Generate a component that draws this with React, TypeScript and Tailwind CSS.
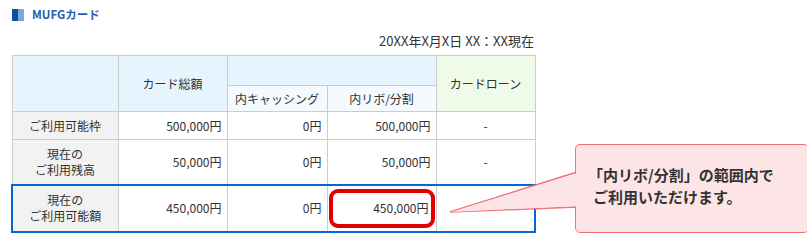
import React from "react";

const font = { fontFamily: '"Noto Sans CJK JP", "Noto Sans", sans-serif' };

export default function App() {
  const bd = "border border-[#cccccc]";
  return (
    <div className="relative w-[807px] h-[247px] bg-white text-[#333333]" style={font}>
      <div className="ml-[12px] pt-[9px] flex items-center gap-[8px] h-[21px]">
        <div className="flex h-[12px] w-[12px]">
          <div className="w-[6px] h-full bg-[#0e4f9e]" />
          <div className="w-[6px] h-full bg-[#7aa8dc]" />
        </div>
        <span className="text-[11.5px] font-bold text-[#2a5ea8] leading-none">MUFGカード</span>
      </div>
      <div className="ml-[11px] w-[523px]">
        <div className="text-right text-[13px] leading-none mt-[13px] pr-0">20XX年X月X日 XX：XX現在</div>
        <table className="mt-[8px] border-collapse table-fixed w-[523px] text-[12px] leading-[16px]">
          <colgroup>
            <col className="w-[106px]" />
            <col className="w-[109px]" />
            <col className="w-[100px]" />
            <col className="w-[109px]" />
            <col className="w-[99px]" />
          </colgroup>
          <tbody>
            <tr className="h-[30px]">
              <td rowSpan={2} className={`${bd} bg-[#e6f4fd]`} />
              <td rowSpan={2} className={`${bd} bg-[#e6f4fd] text-center`}>カード総額</td>
              <td colSpan={2} className={`${bd} bg-[#e6f4fd]`} />
              <td rowSpan={2} className={`${bd} bg-[#f0fae8] text-center`}>カードローン</td>
            </tr>
            <tr className="h-[26px]">
              <td className={`${bd} bg-[#f4fafe] text-center`}>内キャッシング</td>
              <td className={`${bd} bg-[#f4fafe] text-center`}>内リボ/分割</td>
            </tr>
            <tr className="h-[28px]">
              <td className={`${bd} bg-[#f2f2f2] text-center`}>ご利用可能枠</td>
              <td className={`${bd} text-right pr-[5px]`}>500,000円</td>
              <td className={`${bd} text-right pr-[5px]`}>0円</td>
              <td className={`${bd} text-right pr-[5px]`}>500,000円</td>
              <td className={`${bd} text-center`}>-</td>
            </tr>
            <tr className="h-[45px]">
              <td className={`${bd} bg-[#f2f2f2] text-center`}>現在の<br />ご利用残高</td>
              <td className={`${bd} text-right pr-[5px]`}>50,000円</td>
              <td className={`${bd} text-right pr-[5px]`}>0円</td>
              <td className={`${bd} text-right pr-[5px]`}>50,000円</td>
              <td className={`${bd} text-center`}>-</td>
            </tr>
            <tr className="h-[47px]">
              <td className="border-2 border-[#0a64d8] border-r border-r-[#cccccc] bg-[#f2f2f2] text-center">現在の<br />ご利用可能額</td>
              <td className="border-y-2 border-y-[#0a64d8] border-x border-x-[#cccccc] text-right pr-[5px]">450,000円</td>
              <td className="border-y-2 border-y-[#0a64d8] border-x border-x-[#cccccc] text-right pr-[5px]">0円</td>
              <td className="border-y-2 border-y-[#0a64d8] border-x border-x-[#cccccc] px-[1px] py-[2px]">
                <div className="h-[39px] border-[4px] border-[#e00000] rounded-[9px] flex items-center justify-end pr-[2px]">450,000円</div>
              </td>
              <td className="border-2 border-[#0a64d8] border-l border-l-[#cccccc]" />
            </tr>
          </tbody>
        </table>
      </div>
      <svg className="absolute left-0 top-0" width="807" height="247" viewBox="0 0 807 247">
        <polygon points="450,212 577,172 577,207" fill="#fde4e6" stroke="#f07078" strokeWidth="1.5" />
      </svg>
      <div className="absolute left-[575px] top-[144px] w-[234px] h-[89px] bg-[#fde4e6] border-[1.5px] border-[#f07078] rounded-[5px] pl-[12px] pt-[19px] text-[15px] font-bold leading-[22px] text-[#333333]">
        「内リボ/分割」の範囲内で<br /><span className="pl-[5px]">ご利用いただけます。</span>
      </div>
      <svg className="absolute left-0 top-0" width="807" height="247" viewBox="0 0 807 247">
        <polygon points="451,212 577.5,173 577.5,206" fill="#fde4e6" />
      </svg>
    </div>
  );
}
